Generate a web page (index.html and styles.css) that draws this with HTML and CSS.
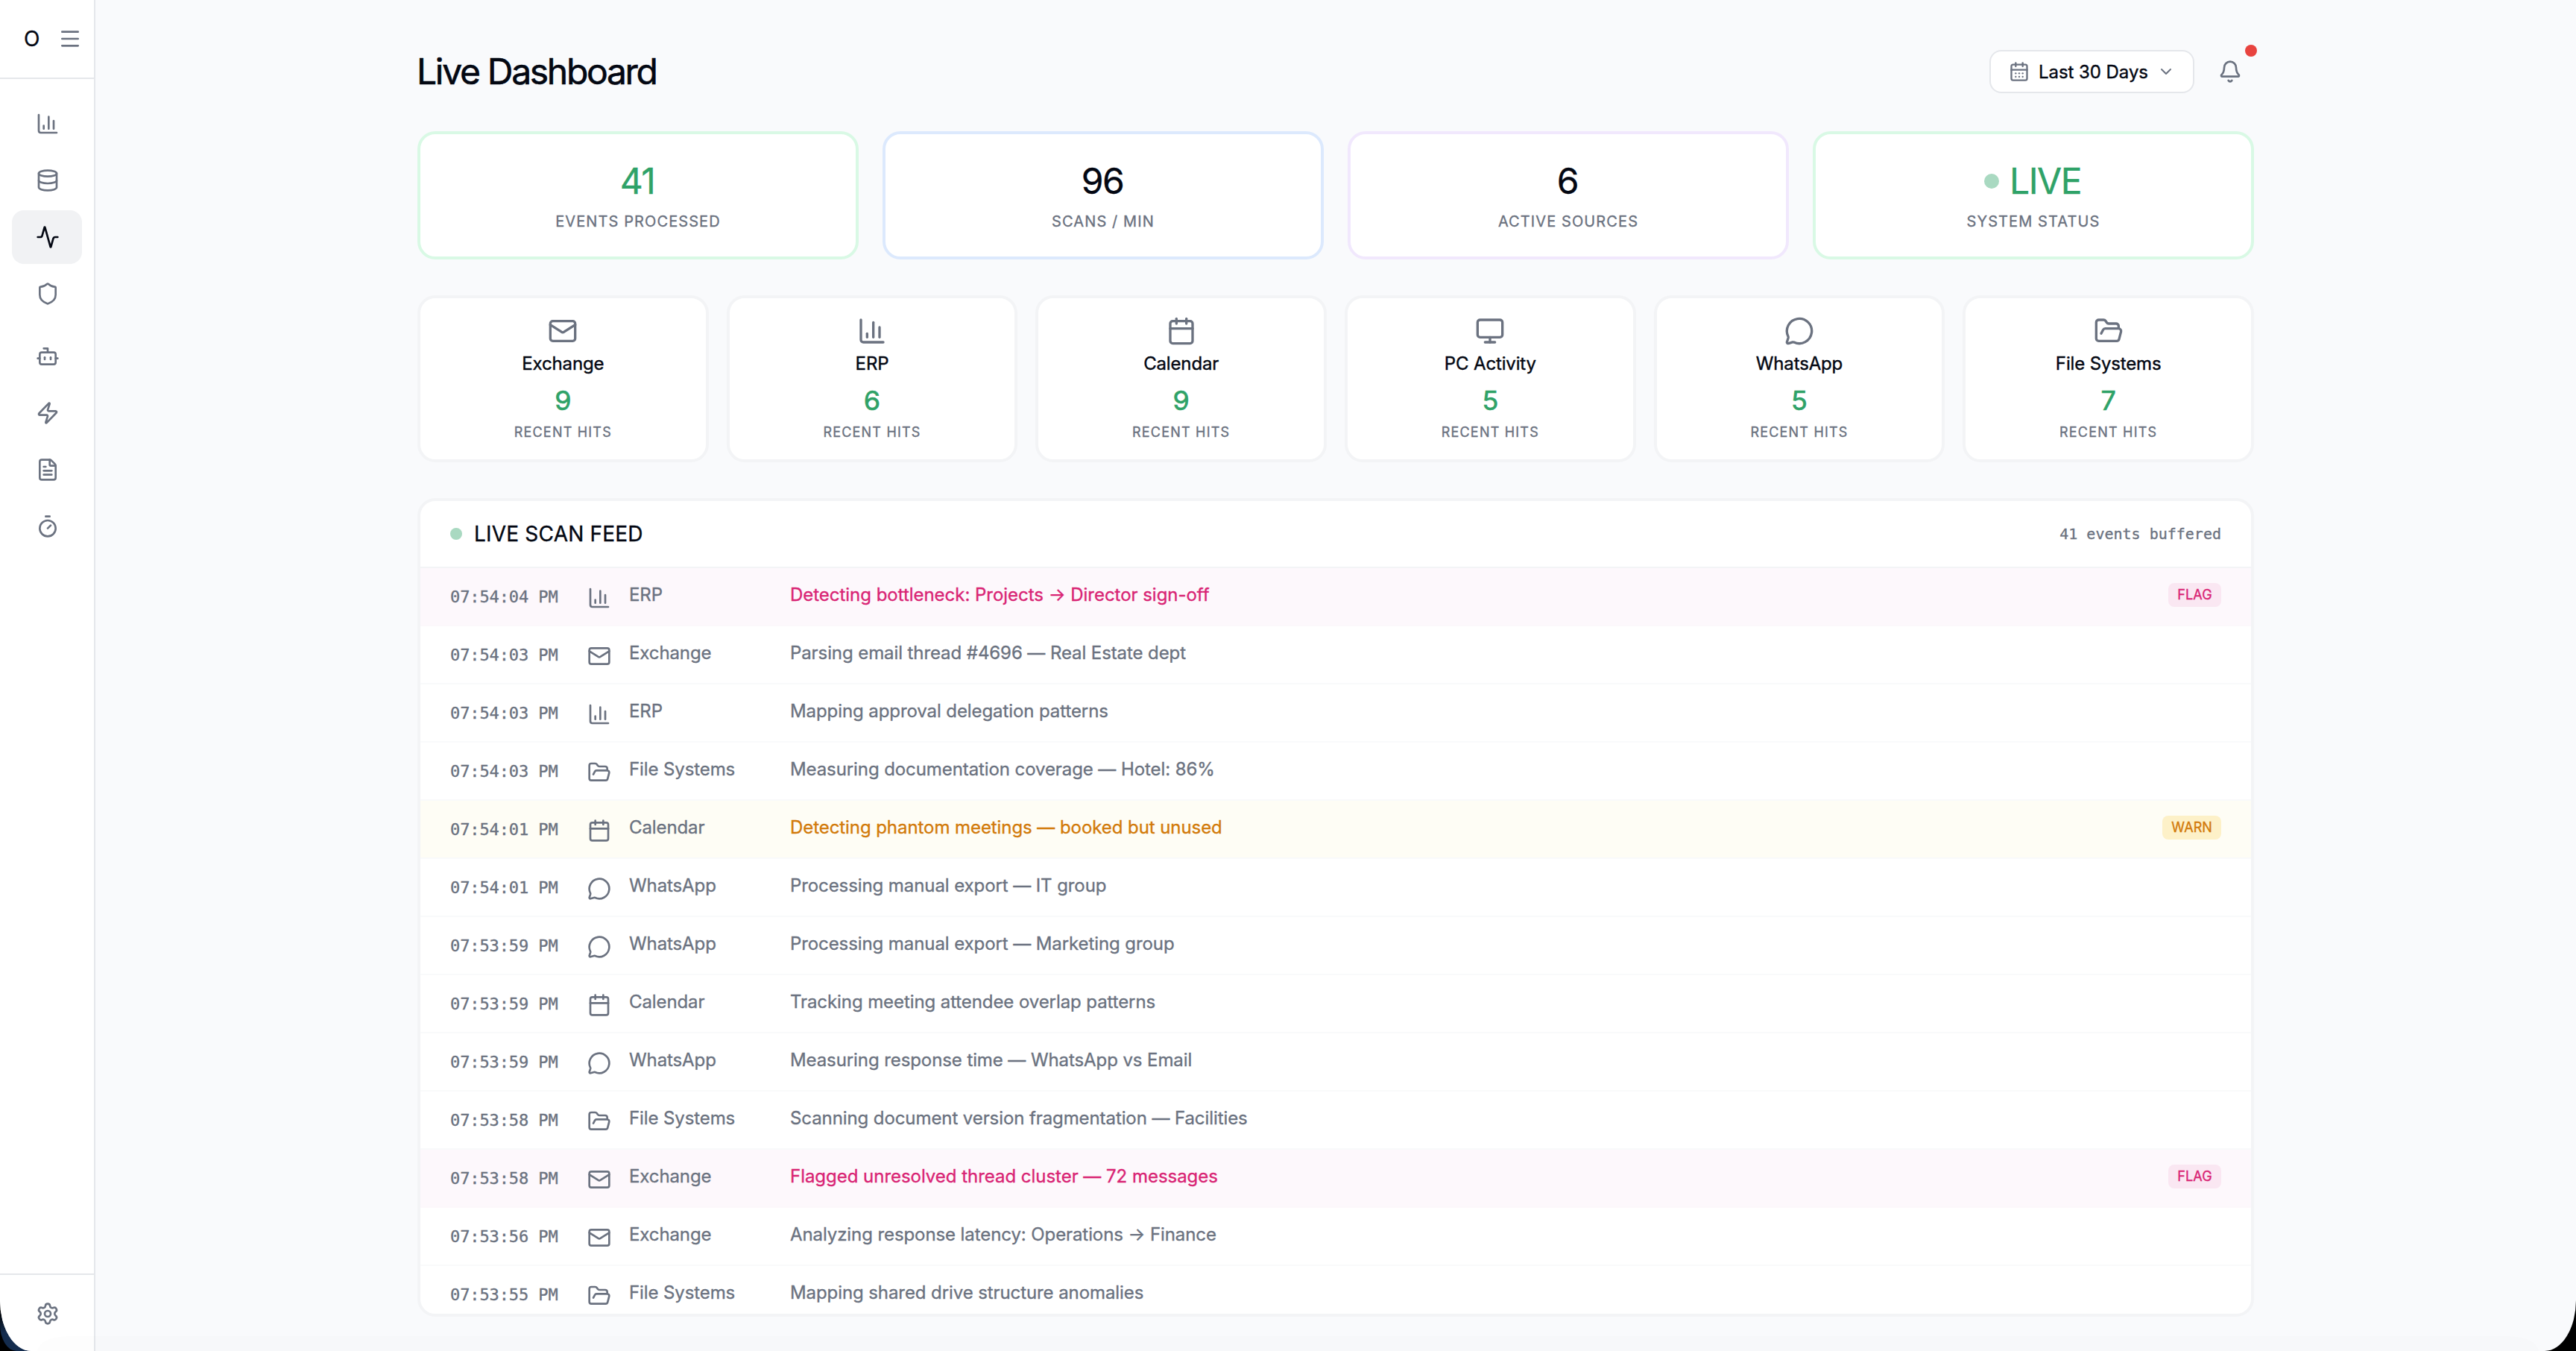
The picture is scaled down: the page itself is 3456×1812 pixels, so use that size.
FILE: index.html
```
<!DOCTYPE html>
<html lang="en">
<head>
<meta charset="utf-8">
<title>Live Dashboard</title>
<link rel="stylesheet" href="styles.css">
</head>
<body>
<svg class="sprite" aria-hidden="true">
  <symbol id="chart" viewBox="0 0 24 24"><path d="M3 3v16a2 2 0 0 0 2 2h16"/><path d="M18 17V9"/><path d="M13 17V5"/><path d="M8 17v-3"/></symbol>
  <symbol id="database" viewBox="0 0 24 24"><ellipse cx="12" cy="5" rx="9" ry="3"/><path d="M3 5V19A9 3 0 0 0 21 19V5"/><path d="M3 12A9 3 0 0 0 21 12"/></symbol>
  <symbol id="activity" viewBox="0 0 24 24"><path d="M22 12h-2.48a2 2 0 0 0-1.93 1.46l-2.35 8.36a.25.25 0 0 1-.48 0L9.24 2.18a.25.25 0 0 0-.48 0l-2.35 8.36A2 2 0 0 1 4.49 12H2"/></symbol>
  <symbol id="shield" viewBox="0 0 24 24"><path d="M20 13c0 5-3.5 7.5-7.66 8.95a1 1 0 0 1-.67-.01C7.5 20.5 4 18 4 13V6a1 1 0 0 1 1-1c2 0 4.5-1.2 6.24-2.72a1.17 1.17 0 0 1 1.52 0C14.51 3.81 17 5 19 5a1 1 0 0 1 1 1z"/></symbol>
  <symbol id="bot" viewBox="0 0 24 24"><path d="M12 8V4H8"/><rect width="16" height="12" x="4" y="8" rx="2"/><path d="M2 14h2"/><path d="M20 14h2"/><path d="M15 13v2"/><path d="M9 13v2"/></symbol>
  <symbol id="zap" viewBox="0 0 24 24"><path d="M4 14a1 1 0 0 1-.78-1.63l9.9-10.2a.5.5 0 0 1 .86.46l-1.92 6.02A1 1 0 0 0 13 10h7a1 1 0 0 1 .78 1.63l-9.9 10.2a.5.5 0 0 1-.86-.46l1.92-6.02A1 1 0 0 0 11 14z"/></symbol>
  <symbol id="file" viewBox="0 0 24 24"><path d="M6 22a2 2 0 0 1-2-2V4a2 2 0 0 1 2-2h8a2.4 2.4 0 0 1 1.704.706l3.588 3.588A2.4 2.4 0 0 1 20 8v12a2 2 0 0 1-2 2z"/><path d="M14 2v5a1 1 0 0 0 1 1h5"/><path d="M10 9H8"/><path d="M16 13H8"/><path d="M16 17H8"/></symbol>
  <symbol id="timer" viewBox="0 0 24 24"><path d="M10 2h4"/><path d="M12 14l3-3"/><circle cx="12" cy="14" r="8"/></symbol>
  <symbol id="settings" viewBox="0 0 24 24"><path d="M9.671 4.136a2.34 2.34 0 0 1 4.659 0 2.34 2.34 0 0 0 3.319 1.915 2.34 2.34 0 0 1 2.33 4.033 2.34 2.34 0 0 0 0 3.831 2.34 2.34 0 0 1-2.33 4.033 2.34 2.34 0 0 0-3.319 1.915 2.34 2.34 0 0 1-4.659 0 2.34 2.34 0 0 0-3.32-1.915 2.34 2.34 0 0 1-2.33-4.033 2.34 2.34 0 0 0 0-3.831A2.34 2.34 0 0 1 6.35 6.051a2.34 2.34 0 0 0 3.319-1.915"/><circle cx="12" cy="12" r="3"/></symbol>
  <symbol id="menu" viewBox="0 0 24 24"><path d="M4 5h16"/><path d="M4 12h16"/><path d="M4 19h16"/></symbol>
  <symbol id="mail" viewBox="0 0 24 24"><rect width="20" height="16" x="2" y="4" rx="2"/><path d="m22 7-8.991 5.727a2 2 0 0 1-2.009 0L2 7"/></symbol>
  <symbol id="calendar" viewBox="0 0 24 24"><path d="M8 2v4"/><path d="M16 2v4"/><rect width="18" height="18" x="3" y="4" rx="2"/><path d="M3 10h18"/></symbol>
  <symbol id="days" viewBox="0 0 24 24"><path d="M8 2v4"/><path d="M16 2v4"/><rect width="18" height="18" x="3" y="4" rx="2"/><path d="M3 10h18"/><path d="M8 14h.01"/><path d="M12 14h.01"/><path d="M16 14h.01"/><path d="M8 18h.01"/><path d="M12 18h.01"/><path d="M16 18h.01"/></symbol>
  <symbol id="monitor" viewBox="0 0 24 24"><rect width="20" height="14" x="2" y="3" rx="2"/><path d="M8 21h8"/><path d="M12 17v4"/></symbol>
  <symbol id="message" viewBox="0 0 24 24"><path d="M2.992 16.342a2 2 0 0 1 .094 1.167l-1.065 3.29a1 1 0 0 0 1.236 1.168l3.413-.998a2 2 0 0 1 1.099.092 10 10 0 1 0-4.777-4.719"/></symbol>
  <symbol id="folder" viewBox="0 0 24 24"><path d="m6 14 1.5-2.9A2 2 0 0 1 9.24 10H20a2 2 0 0 1 1.94 2.5l-1.54 6a2 2 0 0 1-1.95 1.5H4a2 2 0 0 1-2-2V5a2 2 0 0 1 2-2h3.9a2 2 0 0 1 1.69.9l.81 1.2a2 2 0 0 0 1.67.9H18a2 2 0 0 1 2 2v2"/></symbol>
  <symbol id="bell" viewBox="0 0 24 24"><path d="M10.268 21a2 2 0 0 0 3.464 0"/><path d="M3.262 15.326A1 1 0 0 0 4 17h16a1 1 0 0 0 .74-1.673C19.41 13.956 18 12.499 18 8A6 6 0 0 0 6 8c0 4.499-1.411 5.956-2.738 7.326"/></symbol>
  <symbol id="chevron" viewBox="0 0 24 24"><path d="m6 9 6 6 6-6"/></symbol>
</svg>
<div class="corner"></div>
<div class="app">
  <aside class="sidebar">
    <div class="brand"><span>O</span><svg class="icon"><use href="#menu"/></svg></div>
    <nav class="nav">
      <a class="nav-item"><svg class="icon"><use href="#chart"/></svg></a>
      <a class="nav-item"><svg class="icon"><use href="#database"/></svg></a>
      <a class="nav-item active"><svg class="icon"><use href="#activity"/></svg></a>
      <a class="nav-item group-end"><svg class="icon"><use href="#shield"/></svg></a>
      <a class="nav-item"><svg class="icon"><use href="#bot"/></svg></a>
      <a class="nav-item"><svg class="icon"><use href="#zap"/></svg></a>
      <a class="nav-item"><svg class="icon"><use href="#file"/></svg></a>
      <a class="nav-item"><svg class="icon"><use href="#timer"/></svg></a>
    </nav>
    <div class="sidebar-foot"><a class="nav-item"><svg class="icon"><use href="#settings"/></svg></a></div>
  </aside>
  <main class="main">
    <header class="header">
      <h1>Live Dashboard</h1>
      <div class="actions">
        <button class="range"><svg class="icon icon-md"><use href="#days"/></svg><span>Last 30 Days</span><svg class="icon icon-sm"><use href="#chevron"/></svg></button>
        <div class="bell"><svg class="icon"><use href="#bell"/></svg><i class="alert"></i></div>
      </div>
    </header>

    <section class="stats">
      <div class="stat green"><div class="value">41</div><div class="label">EVENTS PROCESSED</div></div>
      <div class="stat blue"><div class="value">96</div><div class="label">SCANS / MIN</div></div>
      <div class="stat purple"><div class="value">6</div><div class="label">ACTIVE SOURCES</div></div>
      <div class="stat green"><div class="value"><i class="dot dot-lg"></i><span>LIVE</span></div><div class="label">SYSTEM STATUS</div></div>
    </section>

    <section class="sources">
      <div class="source"><svg class="icon icon-lg"><use href="#mail"/></svg><b>Exchange</b><strong>9</strong><small>RECENT HITS</small></div>
      <div class="source"><svg class="icon icon-lg"><use href="#chart"/></svg><b>ERP</b><strong>6</strong><small>RECENT HITS</small></div>
      <div class="source"><svg class="icon icon-lg"><use href="#calendar"/></svg><b>Calendar</b><strong>9</strong><small>RECENT HITS</small></div>
      <div class="source"><svg class="icon icon-lg"><use href="#monitor"/></svg><b>PC Activity</b><strong>5</strong><small>RECENT HITS</small></div>
      <div class="source"><svg class="icon icon-lg"><use href="#message"/></svg><b>WhatsApp</b><strong>5</strong><small>RECENT HITS</small></div>
      <div class="source"><svg class="icon icon-lg"><use href="#folder"/></svg><b>File Systems</b><strong>7</strong><small>RECENT HITS</small></div>
    </section>

    <section class="feed">
      <div class="feed-head"><i class="dot"></i><h2>LIVE SCAN FEED</h2><span class="count">41 events buffered</span></div>
      <div class="rows">
        <div class="row flag"><time>07:54:04 PM</time><svg class="icon"><use href="#chart"/></svg><span class="name">ERP</span><p>Detecting bottleneck: Projects → Director sign-off</p><em>FLAG</em></div>
        <div class="row"><time>07:54:03 PM</time><svg class="icon"><use href="#mail"/></svg><span class="name">Exchange</span><p>Parsing email thread #4696 — Real Estate dept</p></div>
        <div class="row"><time>07:54:03 PM</time><svg class="icon"><use href="#chart"/></svg><span class="name">ERP</span><p>Mapping approval delegation patterns</p></div>
        <div class="row"><time>07:54:03 PM</time><svg class="icon"><use href="#folder"/></svg><span class="name">File Systems</span><p>Measuring documentation coverage — Hotel: 86%</p></div>
        <div class="row warn"><time>07:54:01 PM</time><svg class="icon"><use href="#calendar"/></svg><span class="name">Calendar</span><p>Detecting phantom meetings — booked but unused</p><em>WARN</em></div>
        <div class="row"><time>07:54:01 PM</time><svg class="icon"><use href="#message"/></svg><span class="name">WhatsApp</span><p>Processing manual export — IT group</p></div>
        <div class="row"><time>07:53:59 PM</time><svg class="icon"><use href="#message"/></svg><span class="name">WhatsApp</span><p>Processing manual export — Marketing group</p></div>
        <div class="row"><time>07:53:59 PM</time><svg class="icon"><use href="#calendar"/></svg><span class="name">Calendar</span><p>Tracking meeting attendee overlap patterns</p></div>
        <div class="row"><time>07:53:59 PM</time><svg class="icon"><use href="#message"/></svg><span class="name">WhatsApp</span><p>Measuring response time — WhatsApp vs Email</p></div>
        <div class="row"><time>07:53:58 PM</time><svg class="icon"><use href="#folder"/></svg><span class="name">File Systems</span><p>Scanning document version fragmentation — Facilities</p></div>
        <div class="row flag"><time>07:53:58 PM</time><svg class="icon"><use href="#mail"/></svg><span class="name">Exchange</span><p>Flagged unresolved thread cluster — 72 messages</p><em>FLAG</em></div>
        <div class="row"><time>07:53:56 PM</time><svg class="icon"><use href="#mail"/></svg><span class="name">Exchange</span><p>Analyzing response latency: Operations → Finance</p></div>
        <div class="row"><time>07:53:55 PM</time><svg class="icon"><use href="#folder"/></svg><span class="name">File Systems</span><p>Mapping shared drive structure anomalies</p></div>
      </div>
    </section>
  </main>
  <div class="shade"></div>
</div>
</body>
</html>
```
FILE: styles.css
```
* { box-sizing: border-box; margin: 0; padding: 0; }

html, body { height: 1812px; overflow: hidden; background: #000; }

body {
  position: relative;
  font-family: Inter, "Liberation Sans", sans-serif;
  color: #030712;
  -webkit-text-stroke: 0.35px;
}

.sprite { position: absolute; width: 0; height: 0; }

.icon {
  display: block;
  flex: none;
  width: 32px;
  height: 32px;
  fill: none;
  stroke: #6b7280;
  stroke-width: 2;
  stroke-linecap: round;
  stroke-linejoin: round;
}
.icon-sm { width: 24px; height: 24px; }
.icon-md { width: 28px; height: 28px; }
.icon-lg { width: 40px; height: 40px; }

/* desktop showing behind the rounded window corner */
.corner {
  position: absolute;
  left: 0;
  bottom: 0;
  width: 60px;
  height: 60px;
  background: linear-gradient(#000 10%, #142c4e 60%);
  border-bottom-left-radius: 22px 36px;
}

.app {
  position: relative;
  display: flex;
  height: 1812px;
  background: #f9fafc;
  border-radius: 0 0 42px 42px / 0 0 68px 68px;
  overflow: hidden;
}

.shade {
  position: absolute;
  left: 50px;
  right: 50px;
  bottom: 0;
  height: 20px;
  background: rgba(0, 0, 0, 0.006);
  border-radius: 40px 40px 0 0 / 20px 20px 0 0;
}

/* Sidebar */
.sidebar {
  display: flex;
  flex-direction: column;
  flex: none;
  width: 128px;
  background: #fff;
  border-right: 2px solid #e5e7eb;
}
.brand {
  display: flex;
  align-items: center;
  justify-content: space-between;
  height: 106px;
  padding: 0 16px 0 32px;
  border-bottom: 2px solid #e5e7eb;
  font-size: 28px;
}
.nav {
  display: flex;
  flex: 1;
  flex-direction: column;
  gap: 4px;
  padding: 24px 16px;
}
.nav-item {
  display: flex;
  align-items: center;
  height: 72px;
  padding-left: 32px;
  border-radius: 16px;
}
.nav-item.active { background: #f1f2f4; }
.nav-item.active .icon { stroke: #030712; }
.group-end { margin-bottom: 8px; }
.sidebar-foot {
  height: 104px;
  padding: 16px;
  border-top: 2px solid #e5e7eb;
}

/* Main column */
.main {
  display: flex;
  flex-direction: column;
  gap: 48px;
  width: 2464px;
  margin: 0 auto;
  padding-top: 64px;
}
.header {
  display: flex;
  align-items: center;
  justify-content: space-between;
  height: 64px;
}
h1 {
  margin-left: -1px;
  font-size: 48px;
  line-height: 64px;
  font-weight: 400;
  letter-spacing: -2.3px;
  -webkit-text-stroke-width: 0.6px;
}
.actions { display: flex; align-items: center; gap: 16px; }
.range {
  display: flex;
  align-items: center;
  gap: 12px;
  height: 58px;
  padding: 0 24px;
  border: 2px solid #e5e7eb;
  border-radius: 16px;
  background: #fff;
  color: #030712;
  font: 400 24px Inter, sans-serif;
  -webkit-text-stroke-width: 0.4px;
}
.range span { letter-spacing: -0.05px; }
.bell {
  position: relative;
  display: grid;
  place-items: center;
  width: 64px;
  height: 64px;
}
.alert {
  position: absolute;
  top: -4px;
  right: -4px;
  width: 16px;
  height: 16px;
  border-radius: 50%;
  background: #e8433f;
}

/* Stat cards */
.stats { display: grid; grid-template-columns: repeat(4, 1fr); gap: 32px; }
.stat {
  height: 172px;
  padding-top: 32px;
  border: 4px solid;
  border-radius: 24px;
  background: #fff;
  text-align: center;
}
.stat.green { border-color: #d9f9e5; }
.stat.blue { border-color: #dce9fd; }
.stat.purple { border-color: #f1e8fd; }
.value {
  display: flex;
  align-items: center;
  justify-content: center;
  gap: 14px;
  padding-right: 2px;
  font-size: 48px;
  line-height: 62px;
  letter-spacing: -1.5px;
}
.green .value { color: #2fa268; }
.label {
  margin-top: 8px;
  font-size: 20px;
  line-height: 30px;
  letter-spacing: 1.1px;
  color: #6b7280;
}
.dot {
  flex: none;
  width: 16px;
  height: 16px;
  border-radius: 50%;
  background: #a9d9c1;
}
.dot-lg { width: 20px; height: 20px; }

/* Source cards */
.sources { display: grid; grid-template-columns: repeat(6, 1fr); gap: 24px; }
.source {
  display: flex;
  flex-direction: column;
  align-items: center;
  height: 224px;
  padding-top: 24px;
  border: 4px solid #f3f4f6;
  border-radius: 24px;
  background: #fff;
}
.source b {
  margin-top: 6px;
  font-size: 24px;
  line-height: 36px;
  font-weight: 400;
  letter-spacing: -0.15px;
  -webkit-text-stroke-width: 0.4px;
}
.source strong {
  margin-top: 3px;
  margin-bottom: 1px;
  font-size: 36px;
  line-height: 56px;
  font-weight: 400;
  color: #2fa268;
  -webkit-text-stroke-width: 0.7px;
}
.source small {
  font-size: 18px;
  line-height: 27px;
  letter-spacing: 1.2px;
  color: #6b7280;
}

/* Feed */
.feed {
  height: 1098px;
  border: 4px solid #f3f4f6;
  border-radius: 24px;
  background: #fff;
  overflow: hidden;
}
.feed-head {
  display: flex;
  align-items: center;
  gap: 16px;
  height: 90px;
  padding: 0 40px;
  border-bottom: 2px solid #f3f4f6;
}
h2 { font-size: 28px; line-height: 40px; font-weight: 400; letter-spacing: 0.2px; }
.count {
  margin-left: auto;
  font: 20px "DejaVu Sans Mono", monospace;
  color: #6b7280;
}
.row {
  display: flex;
  align-items: flex-start;
  gap: 24px;
  height: 78px;
  padding: 20px 40px 0;
  border-bottom: 2px solid #f9fafb;
  font-size: 24px;
  line-height: 31px;
  color: #6b7280;
}
.row time {
  width: 160px;
  font: 22px/38px "DejaVu Sans Mono", monospace;
  letter-spacing: -0.1px;
}
.row .icon { margin-top: 4px; }
.row .name { width: 192px; letter-spacing: -0.1px; }
.row p { flex: 1; letter-spacing: -0.09px; }
.row em {
  height: 32px;
  padding: 0 12px;
  border-radius: 8px;
  font-size: 18px;
  line-height: 32px;
  font-style: normal;
}
.row.flag { background: #fdf8fc; border-bottom-color: #fcf8fb; }
.row.flag p { color: #d92474; letter-spacing: -0.03px; }
.row.flag em { background: #fae7f2; color: #d92474; letter-spacing: 0.2px; }
.row.warn { background: #fefdf5; }
.row.warn p { color: #d27a0a; letter-spacing: -0.07px; }
.row.warn em { background: #fdf1c8; color: #d27a0a; letter-spacing: 0.1px; }
```
